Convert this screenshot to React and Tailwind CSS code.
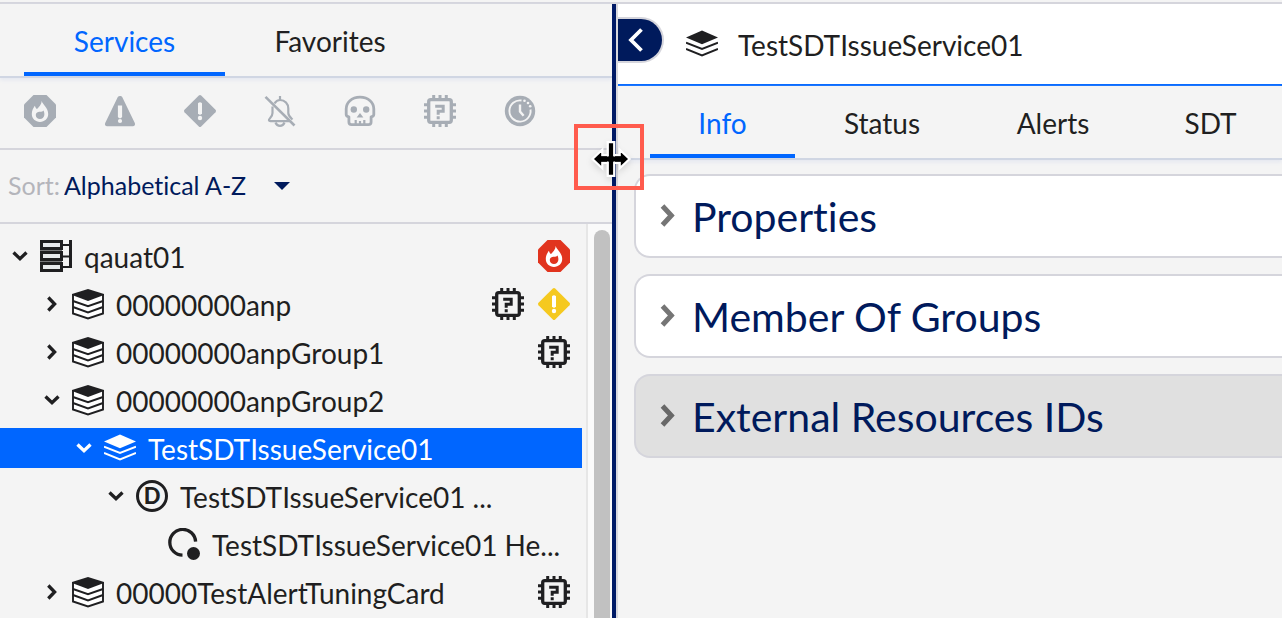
// App.jsx
// Resource tree on the left, details of the selected service on the right
import { useState } from 'react';

/* ---------- Icons ---------- */

function ServiceBoxIcon() {
  return (
    <svg viewBox="0 0 32 32" className="w-8 h-8 shrink-0" fill="none" stroke="currentColor" strokeWidth="1.9">
      <path d="M1 7v18.500L16 30.500l15-5V7" fill="#fff" />
      <path d="M1 13l15 5.200L31 13M1 19l15 5.500L31 19" />
      <path d="M0 6L16 1l16 5v1L16 13 0 7z" fill="currentColor" stroke="none" />
    </svg>
  );
}

function ServiceIcon() {
  return (
    <svg viewBox="0 0 32 32" className="w-8 h-8 shrink-0" fill="none" stroke="currentColor" strokeWidth="1.9">
      <path d="M0 9.500L16 2.500l16 7-16 6.700z" fill="currentColor" stroke="none" />
      <path d="M0 14.700L16 21l16-6.300M0 21l16 6.500L32 21" />
    </svg>
  );
}

function RootIcon() {
  return (
    <svg viewBox="0 0 32 32" className="w-8 h-8 shrink-0" fill="none" stroke="currentColor">
      <path d="M22 5h8M22 16.500h8M22 27h8" strokeWidth="2" />
      <path d="M30.500 0v28" strokeWidth="3" />
      <g fill="#e8eaed" strokeWidth="3">
        <path d="M1.500 1.500h20v7h-20zM1.500 12.500h20v7h-20zM1.500 23.500h20v7h-20z" />
      </g>
      <path d="M0 10.500h22M0 21.500h22" stroke="#77787a" />
    </svg>
  );
}

function FireIcon({ className, flame }) {
  return (
    <svg viewBox="0 0 32 32" className={className} fill="currentColor">
      <path d="M9.500 0h13L32 9.500v13L22.500 32h-13L0 22.500v-13z" />
      <path
        d="M17.600 6c1 3.400 6.600 6.800 6.600 13 0 4.600-3.600 7.900-8.200 7.900S7.800 23.600 7.800 19c0-3.500 1.600-6 3-8.200.7 1.300 1 2.700 2.200 3.300C14.300 12.400 17.600 10 17.600 6z"
        className={flame}
      />
      <path d="M19.500 15.600c.8 1.800 1 3 .8 4.600-.4 2.300-2 3.800-4.300 3.800s-4.200-1.600-4.200-3.800c0-1.600 1-2.800 2.300-3.100 1.900-.4 3.900.4 5.400-1.500z" />
    </svg>
  );
}

function TriangleIcon() {
  return (
    <svg viewBox="0 0 32 32" className="w-8 h-8" fill="currentColor">
      <path d="M13.800 2C14.700.6 17.300.6 18.200 2l12.600 26c.8 1.600-.2 3.200-2 3.200H3.200c-1.800 0-2.800-1.600-2-3.200z" />
      <path d="M13.900 10.500h4.200v10.800a2.100 2.100 0 0 1-4.200 0z" className="fill-[#f4f4f4]" />
      <circle cx="16" cy="26" r="2.100" className="fill-[#f4f4f4]" />
    </svg>
  );
}

function DiamondIcon({ className, mark }) {
  return (
    <svg viewBox="0 0 32 32" className={className} fill="currentColor">
      <path d="M14.800.5q1.200-1 2.400 0l14.300 14.300q1 1.200 0 2.400L17.200 31.500q-1.200 1-2.400 0L.5 17.200q-1-1.200 0-2.400z" />
      <path d="M14 8.200q2-2 4 0v10q-2 3-4 0z" className={mark} />
      <circle cx="16" cy="23" r="2.200" className={mark} />
    </svg>
  );
}

function BellOffIcon() {
  return (
    <svg viewBox="0 0 32 32" className="w-8 h-8" fill="none" stroke="currentColor" strokeWidth="2.200">
      <path d="M16 1v4M8.500 11.500v6.500c0 2.400-1 3.800-2.500 5.200-1.800 1.700-1.200 3 .5 3h19M10.500 8.500C12 6 14 5 16 5c5 0 8.300 4 8.300 8.500V18c0 3 2 4.500 4.200 6.500" />
      <path d="M11.500 27.500c1 2.700 2.600 3.300 4.500 3.300s3.500-.6 4.500-3.300" />
      <path d="M1.500 1.800l29 28.700" strokeWidth="2.600" />
    </svg>
  );
}

function SkullIcon() {
  return (
    <svg viewBox="0 0 32 32" className="w-8 h-8" fill="none" stroke="currentColor" strokeWidth="2.800" strokeLinejoin="round">
      <path d="M16 2.200C7.500 2.200 2.200 7.700 2.200 14v5.500c0 1.500 1 2 2.700 2.300V27c0 2 1 2.700 2.700 2.700h16.800c1.700 0 2.700-.7 2.700-2.700v-5.200c1.700-.3 2.700-.8 2.700-2.300V14c0-6.300-5.300-11.800-13.800-11.800z" />
      <path d="M11.700 30v-5M16 30v-4M20.300 30v-5" strokeWidth="2.200" />
      <g fill="currentColor" stroke="none">
        <circle cx="9.800" cy="14.500" r="3.200" />
        <circle cx="22.200" cy="14.500" r="3.200" />
        <path d="M16 18l3.400 4.500h-6.800z" />
      </g>
    </svg>
  );
}

function ChipIcon({ className }) {
  return (
    <svg viewBox="0 0 32 32" className={className} fill="none" stroke="currentColor" strokeWidth="3.300">
      <rect x="4.700" y="4.700" width="22.600" height="22.600" rx="2" />
      <path d="M9.700 0v4M16 0v4M22.300 0v4M9.700 28v4M16 28v4M22.300 28v4M0 9.700h4M0 16h4M0 22.300h4M28 9.700h4M28 16h4M28 22.300h4" strokeWidth="3" />
      <path d="M11.200 11.300h8v4.900h-5v3.500M14.200 21.300v3" strokeWidth="3" />
    </svg>
  );
}

function ClockIcon() {
  return (
    <svg viewBox="0 0 32 32" className="w-8 h-8" fill="none">
      <circle cx="16" cy="16" r="15.200" fill="currentColor" />
      <g className="stroke-[#f4f4f4]" strokeWidth="1.900">
        <path d="M17.500 5.500A10.600 10.600 0 1 0 26.500 14.500" />
        <path d="M16 9.500v7l3.600 4.200" strokeWidth="2.400" />
      </g>
      <g className="fill-[#f4f4f4]">
        <circle cx="20.500" cy="5.800" r="1.300" />
        <circle cx="24" cy="8" r="1.300" />
        <circle cx="26.200" cy="11.300" r="1.300" />
      </g>
    </svg>
  );
}

function ArcIcon() {
  return (
    <svg viewBox="0 0 32 32" className="w-8 h-8 shrink-0" fill="none" stroke="currentColor" strokeWidth="3.300">
      <path d="M14.500 27.200A12.900 12.900 0 1 1 27.600 13.600" />
      <circle cx="25.500" cy="25.500" r="6.500" fill="currentColor" stroke="none" />
    </svg>
  );
}

function DeviceIcon() {
  return (
    <span className="flex w-8 h-8 shrink-0 items-center justify-center rounded-full border-3 border-[#1f1f21] text-[22px] leading-none font-black">
      D
    </span>
  );
}

function Caret({ open }) {
  return (
    <svg viewBox="0 0 16 16" className="w-4 h-4 shrink-0" fill="none" stroke="currentColor" strokeWidth="3.300">
      {open ? <path d="M1.500 4.500L8 10.800l6.500-6.300" /> : <path d="M4.300 1.500L10.600 8l-6.300 6.500" />}
    </svg>
  );
}

function ResizeCursor() {
  return (
    <svg viewBox="0 0 44 44" className="w-12 h-12 shrink-0 drop-shadow-md">
      <path
        d="M19 6.500h6v12h5v-5l9 8.500-9 8.500v-5h-5v12h-6v-12h-5v5L5 22l9-8.500v5h5z"
        fill="#000" stroke="#fff" strokeWidth="2"
      />
      <path d="M19 7v30M25 7v30" stroke="#fff" strokeWidth="1.400" />
      <path d="M10 22h24" stroke="#000" strokeWidth="4.500" />
    </svg>
  );
}

/* ---------- Data ---------- */

const FILTERS = [
  { name: 'Critical', icon: <FireIcon className="w-8 h-8" flame="fill-[#f4f4f4]" /> },
  { name: 'Error', icon: <TriangleIcon /> },
  { name: 'Warning', icon: <DiamondIcon className="w-8 h-8" mark="fill-[#f4f4f4]" /> },
  { name: 'Alerting disabled', icon: <BellOffIcon /> },
  { name: 'Dead', icon: <SkullIcon /> },
  { name: 'Unmonitored', icon: <ChipIcon className="w-8 h-8" /> },
  { name: 'Scheduled downtime', icon: <ClockIcon /> },
];

const chip = <ChipIcon className="w-8 h-8" />;
const fire = <FireIcon className="w-8 h-8 text-[#e1341e]" flame="fill-white" />;
const warn = <DiamondIcon className="w-8 h-8 text-[#f5c91f]" mark="fill-white" />;

const ROWS = [
  { id: 1, pad: 'pl-3', open: true, icon: <RootIcon />, label: 'qauat01', badges: [fire] },
  { id: 2, pad: 'pl-11', open: false, icon: <ServiceBoxIcon />, label: '00000000anp', badges: [chip, warn] },
  { id: 3, pad: 'pl-11', open: false, icon: <ServiceBoxIcon />, label: '00000000anpGroup1', badges: [chip] },
  { id: 4, pad: 'pl-11', open: true, icon: <ServiceBoxIcon />, label: '00000000anpGroup2', badges: [] },
  { id: 5, pad: 'pl-19', open: true, icon: <ServiceIcon />, label: 'TestSDTIssueService01', badges: [], selected: true },
  { id: 6, pad: 'pl-27', open: true, icon: <DeviceIcon />, label: 'TestSDTIssueService01 ...', badges: [] },
  { id: 7, pad: 'pl-42', leaf: true, icon: <ArcIcon />, label: 'TestSDTIssueService01 He...', badges: [] },
  { id: 8, pad: 'pl-11', open: false, icon: <ServiceBoxIcon />, label: '00000TestAlertTuningCard', badges: [chip] },
];

/* ---------- Pieces ---------- */

function Tab({ label, width, active, onClick }) {
  return (
    <button role="tab" aria-selected={active} onClick={onClick}
      className={`${width} shrink-0 pt-[6px] text-[28px] leading-8 border-b-4 ${active ? 'border-[#0066ff] text-[#0066ff]' : 'border-transparent'}`}>
      {label}
    </button>
  );
}

function TreeRow({ row }) {
  return (
    <li role="treeitem" aria-selected={!!row.selected}
      className={`flex h-10 items-center pr-3 mr-1 ${row.pad} ${row.selected ? 'bg-[#0066ff] text-white' : ''}`}>
      {!row.leaf && (
        <button aria-label={row.open ? 'Collapse' : 'Expand'} className="mr-3">
          <Caret open={row.open} />
        </button>
      )}
      {row.icon}
      <span className="ml-3 pt-[2px] flex-1 text-[28px] leading-9 whitespace-nowrap">{row.label}</span>
      <span className="flex shrink-0 gap-[14px]">
        {row.badges.map((b, i) => <span key={i}>{b}</span>)}
      </span>
    </li>
  );
}

function Section({ title, hovered }) {
  return (
    <button aria-expanded="false"
      className={`flex h-[84px] items-center gap-4 rounded-l-2xl border-2 border-r-0 border-[#d5d5dc] pl-6 text-left ${hovered ? 'bg-[#e0e0e0] text-[#686868]' : 'bg-white text-[#757575]'}`}>
      <svg viewBox="0 0 16 24" className="w-4 h-6 shrink-0" fill="none" stroke="currentColor" strokeWidth="5">
        <path d="M2.500 2l8.800 9.500L2.500 21" />
      </svg>
      <span className="pt-[2px] text-[41px] leading-12 text-[#001a5c]">{title}</span>
    </button>
  );
}

export default function App() {
  const [side, setSide] = useState('Services');
  const [tab, setTab] = useState('Info');

  return (
    <div className="flex h-screen flex-col overflow-hidden bg-[#f4f4f4] pt-[2px] font-[Lato,sans-serif] text-[#1f1f21] [font-variant-ligatures:none]">
      <div className="flex min-h-0 flex-1 border-t-2 border-[#d5d5dc]">
        {/* Left panel */}
        <aside className="flex w-[612px] shrink-0 flex-col">
          <div role="tablist" className="flex h-[74px] shrink-0 border-b-2 border-[#d0d6e3] pl-6 shadow-[0_2px_4px_#e4e7f0]">
            <Tab label="Services" width="w-[201px]" active={side === 'Services'} onClick={() => setSide('Services')} />
            <Tab label="Favorites" width="w-[210px]" active={side === 'Favorites'} onClick={() => setSide('Favorites')} />
          </div>

          <div className="flex h-[72px] shrink-0 items-center gap-12 border-b-2 border-[#d5d5dc] pb-1 pl-6 text-[#a7adb5]">
            {FILTERS.map(f => (
              <button key={f.name} aria-label={f.name}>{f.icon}</button>
            ))}
          </div>

          <div className="flex h-[74px] shrink-0 items-center border-b-2 border-[#d5d5dc] pl-2 text-[25px]">
            <label htmlFor="sort" className="mr-1 text-[#b4b5bb]">Sort:</label>
            <select id="sort" className="w-[202px] appearance-none bg-transparent text-[#001a5c] outline-none">
              <option>Alphabetical A-Z</option>
            </select>
            <svg viewBox="0 0 16 8" className="ml-2 w-4 h-2" fill="#001a5c">
              <path d="M0 0h16L8 8z" />
            </svg>
          </div>

          <div className="flex min-h-0 flex-1">
            <ul role="tree" className="flex min-w-0 flex-1 flex-col gap-2 overflow-hidden pt-3">
              {ROWS.map(row => <TreeRow key={row.id} row={row} />)}
            </ul>
            <div className="flex w-[26px] shrink-0 justify-end border-l-2 border-[#e6e6e6] bg-[#fafafa] pt-[6px] pr-[2px]">
              <div className="w-4 rounded-t-full bg-[#c1c1c1]" />
            </div>
          </div>
        </aside>

        {/* Splitter */}
        <div className="relative w-1 shrink-0 cursor-col-resize bg-[#001a66]">
          <div className="absolute top-[120px] -left-[38px] z-10 flex h-[66px] w-[70px] items-center justify-center border-4 border-[#ff5b4d] pt-1 pl-1">
            <ResizeCursor />
          </div>
        </div>

        {/* Right panel */}
        <main className="flex min-w-0 flex-1 flex-col overflow-hidden border-l-2 border-[#d8d8dd]">
          <header className="flex h-[82px] shrink-0 items-center border-b-2 border-[#0066ff] bg-white">
            <button aria-label="Collapse panel"
              className="flex h-[46px] w-[46px] items-center rounded-r-full border-2 border-l-0 border-[#d5d5dc] bg-[#001a5c] pl-[10px] mr-[22px] mb-2">
              <svg viewBox="0 0 16 24" className="w-4 h-6" fill="none" stroke="#fff" strokeWidth="3.800">
                <path d="M13.500 1.500L3 12l10.500 10.500" />
              </svg>
            </button>
            <ServiceIcon />
            <h1 className="ml-5 pt-[2px] text-[28px] leading-9">TestSDTIssueService01</h1>
          </header>

          <div role="tablist" className="flex h-[74px] shrink-0 border-b-2 border-[#d0d6e3] pl-8 shadow-[0_2px_4px_#e4e7f0]">
            <Tab label="Info" width="w-[145px]" active={tab === 'Info'} onClick={() => setTab('Info')} />
            <Tab label="Status" width="w-[174px]" active={tab === 'Status'} onClick={() => setTab('Status')} />
            <Tab label="Alerts" width="w-[168px]" active={tab === 'Alerts'} onClick={() => setTab('Alerts')} />
            <Tab label="SDT" width="w-[147px]" active={tab === 'SDT'} onClick={() => setTab('SDT')} />
          </div>

          <div className="flex flex-col gap-4 pt-[14px] pl-4">
            <Section title="Properties" />
            <Section title="Member Of Groups" />
            <Section title="External Resources IDs" hovered />
          </div>
        </main>
      </div>
    </div>
  );
}
